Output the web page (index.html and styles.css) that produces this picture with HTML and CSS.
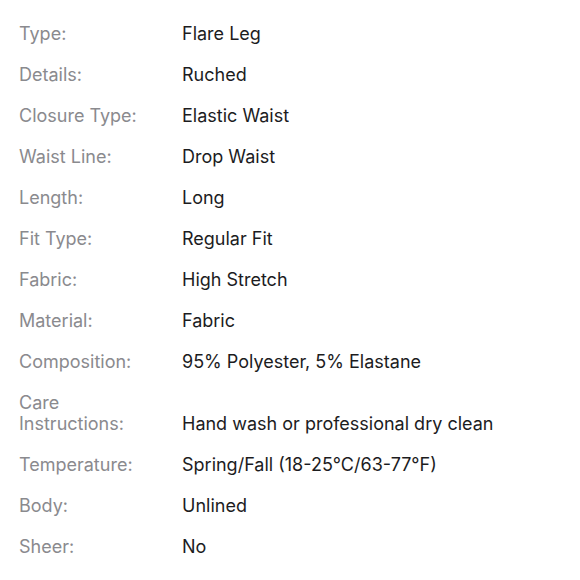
FILE: index.html
```html
<!DOCTYPE html>
<html>
<head>
<meta charset="utf-8">
<link rel="stylesheet" href="styles.css">
</head>
<body>
<dl class="specs">
  <div class="row"><dt>Type:</dt><dd>Flare Leg</dd></div>
  <div class="row"><dt>Details:</dt><dd>Ruched</dd></div>
  <div class="row"><dt>Closure Type:</dt><dd>Elastic Waist</dd></div>
  <div class="row"><dt>Waist Line:</dt><dd>Drop Waist</dd></div>
  <div class="row"><dt>Length:</dt><dd>Long</dd></div>
  <div class="row"><dt>Fit Type:</dt><dd>Regular Fit</dd></div>
  <div class="row"><dt>Fabric:</dt><dd>High Stretch</dd></div>
  <div class="row"><dt>Material:</dt><dd>Fabric</dd></div>
  <div class="row"><dt>Composition:</dt><dd>95% Polyester, 5% Elastane</dd></div>
  <div class="row"><dt>Care<br>Instructions:</dt><dd>Hand wash or professional dry clean</dd></div>
  <div class="row"><dt>Temperature:</dt><dd>Spring/Fall (18-25°C/63-77°F)</dd></div>
  <div class="row"><dt>Body:</dt><dd>Unlined</dd></div>
  <div class="row"><dt>Sheer:</dt><dd>No</dd></div>
</dl>
</body>
</html>
```
FILE: styles.css
```css
html, body {
  margin: 0;
  padding: 0;
  background: #ffffff;
}
body {
  font-family: Inter, "Noto Sans", "Liberation Sans", sans-serif;
  font-size: 18px;
  line-height: 21px;
}
.specs {
  margin: 0;
  padding: 23px 0 0 19px;
  display: flex;
  flex-direction: column;
  gap: 20px;
}
.row {
  display: grid;
  grid-template-columns: 163px 1fr;
  align-items: end;
}
dt {
  color: #8a8a8e;
  margin: 0;
}
dd {
  color: #1c1c1e;
  margin: 0;
}
```
